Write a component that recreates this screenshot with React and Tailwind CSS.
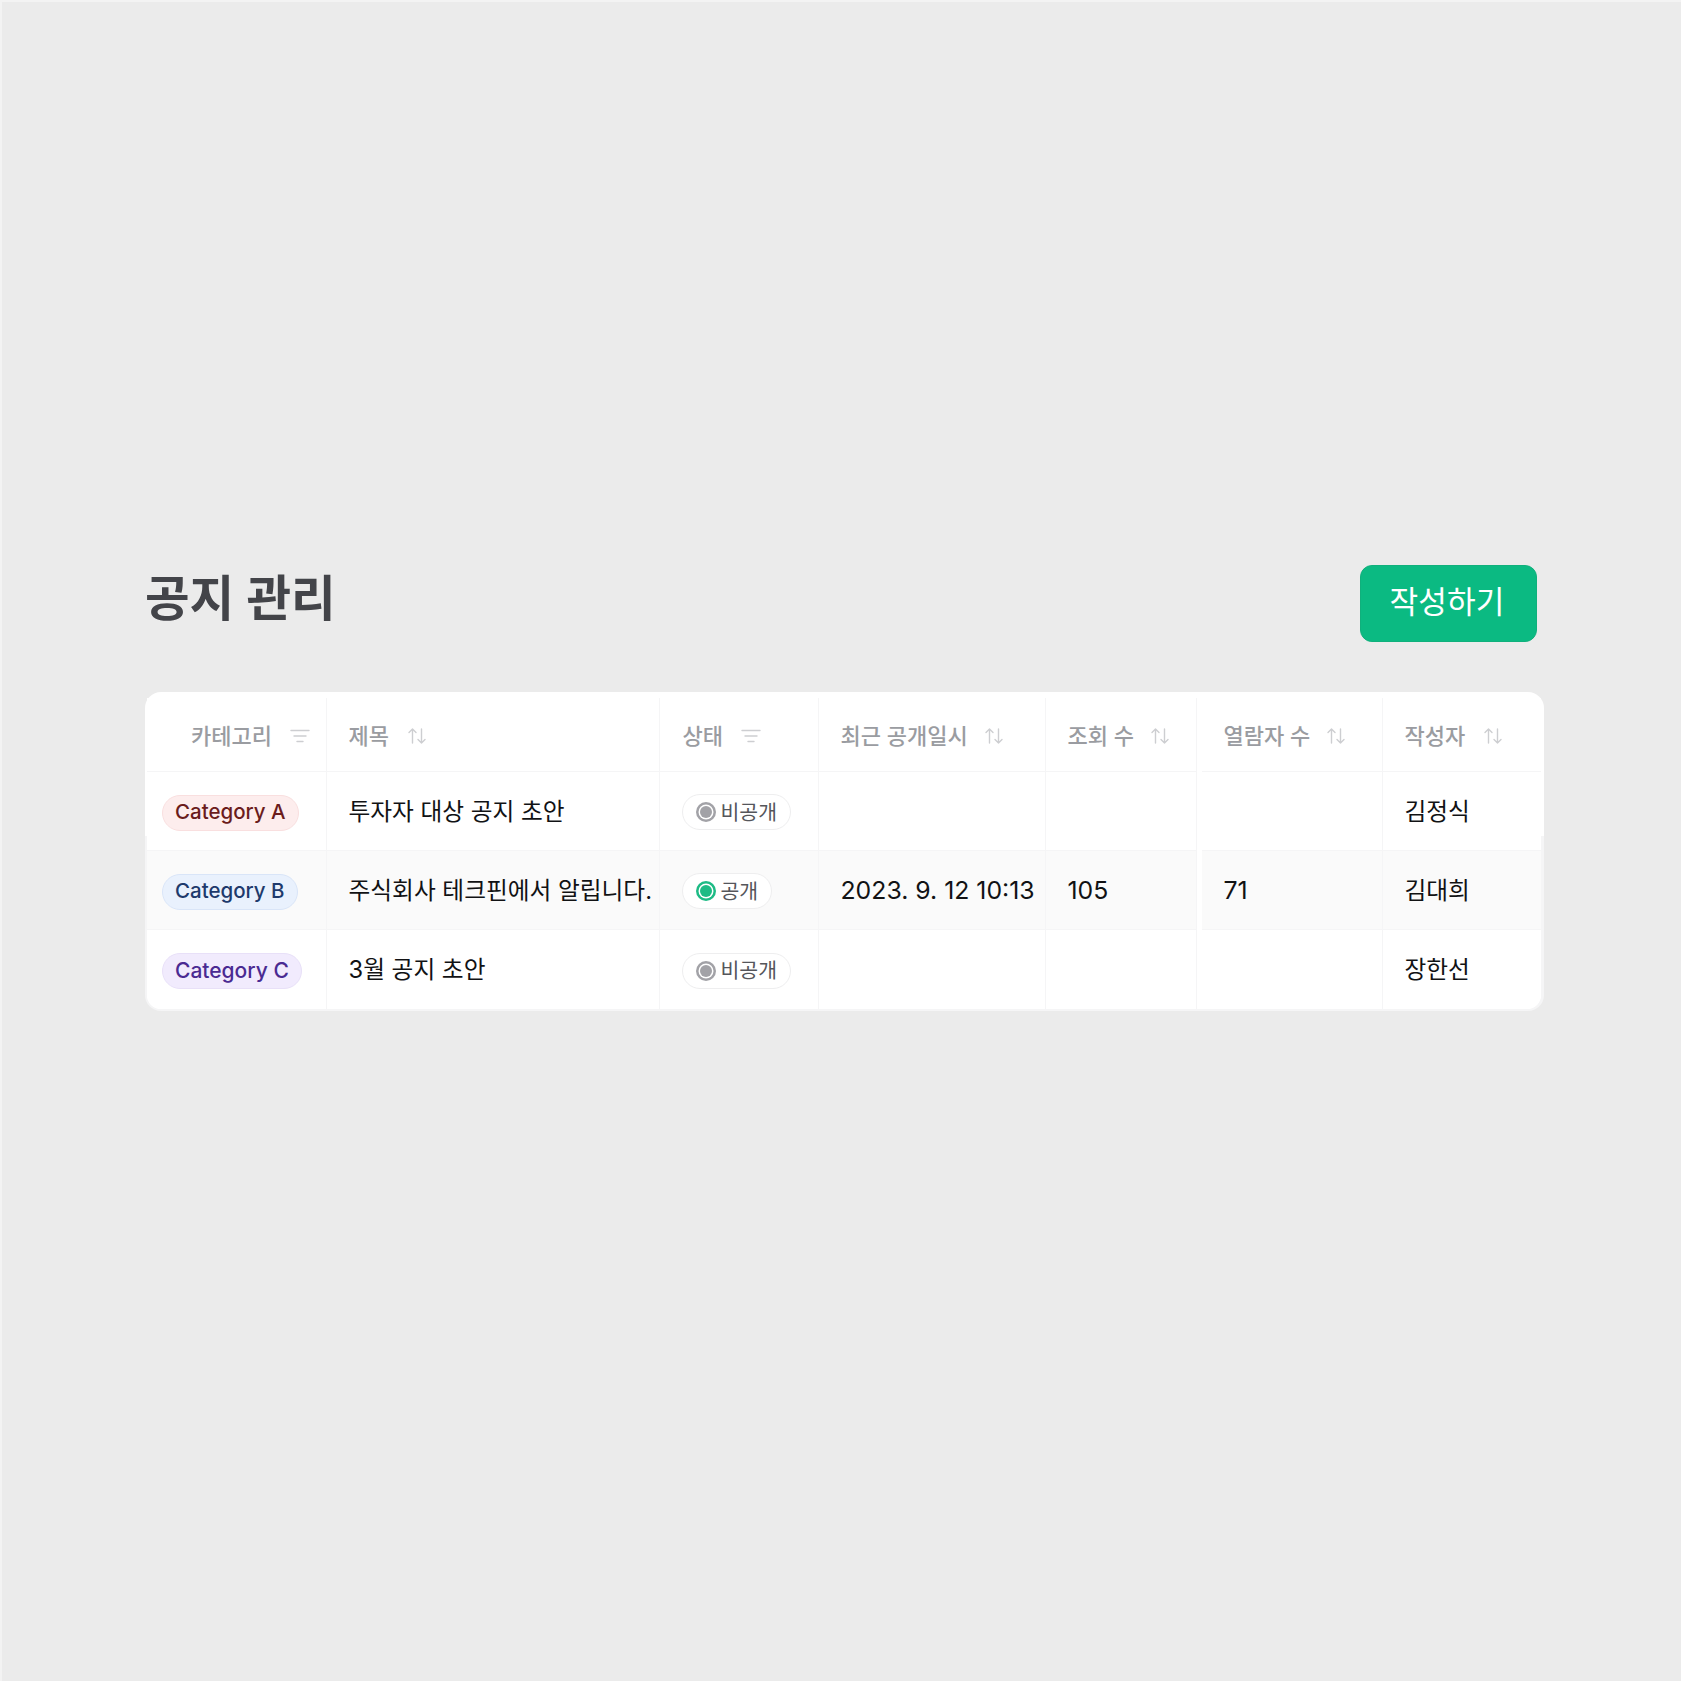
import React from 'react';

const headers = [
    { label: '카테고리', icon: 'filter', pad: 'pl-[44px] gap-[18px] border-r' },
    { label: '제목', icon: 'sort', pad: 'pl-[22px] gap-[18px] border-r' },
    { label: '상태', icon: 'filter', pad: 'pl-[23px] gap-[18px] border-r' },
    { label: '최근 공개일시', icon: 'sort', pad: 'pl-[22px] gap-[16px] border-r' },
    { label: '조회 수', icon: 'sort', pad: 'pl-[22px] gap-[16px] border-r' },
    { label: '열람자 수', icon: 'sort', pad: 'ml-[5px] pl-[22px] gap-[16px] border-r' },
    { label: '작성자', icon: 'sort', pad: 'pl-[22px] gap-[18px]' },
];

const badgeStyles = {
    A: 'text-[20.5px] bg-[#fdeded] border-[#f9dfdf] text-[#6b1c1c]',
    B: 'text-[20.5px] bg-[#e9f1fd] border-[#d9e5f8] text-[#1e3a6c]',
    C: 'text-[21px] bg-[#f1ebfd] border-[#e8e0f8] text-[#4a2a92]',
};

const rows = [
    { cat: 'A', title: '투자자 대상 공지 초안', live: false, date: '', views: '', readers: '', author: '김정식' },
    { cat: 'B', title: '주식회사 테크핀에서 알립니다.', live: true, date: '2023. 9. 12 10:13', views: '105', readers: '71', author: '김대희' },
    { cat: 'C', title: '3월 공지 초안', live: false, date: '', views: '', readers: '', author: '장한선' },
];

function FilterIcon() {
    return (
        <svg width="20" height="16" viewBox="0 0 20 16" fill="none" stroke="#cdced1" strokeWidth="1.4" strokeLinecap="round">
            <path d="M1 2.5h18M4 8h12M7 13.5h6" />
        </svg>
    );
}

function SortIcon() {
    return (
        <svg width="20" height="18" viewBox="0 0 20 18" fill="none" stroke="#cdced1" strokeWidth="1.4" strokeLinecap="round" strokeLinejoin="round">
            <path d="M5.5 16V2M2 5.5L5.5 2 9 5.5" />
            <path d="M14.5 2v14M11 12.5l3.5 3.5 3.5-3.5" />
        </svg>
    );
}

function Category({ cat }) {
    return (
        <span className={`inline-flex items-center h-[36px] px-[12px] rounded-full border font-medium ${badgeStyles[cat]}`}>
            Category {cat}
        </span>
    );
}

function Status({ live }) {
    return (
        <span className="inline-flex items-center gap-[5px] h-[36px] px-[13px] rounded-full border border-[#eeeeef] bg-white text-[20.5px] text-[#55565b]">
            <span className={`flex items-center justify-center w-[20px] h-[20px] rounded-full ${live ? 'bg-[#1dbb85]' : 'bg-[#a2a2a7]'}`}>
                <span className={`w-[12px] h-[12px] rounded-full ring-[1.5px] ring-white ${live ? 'bg-[#1dbb85]' : 'bg-[#a2a2a7]'}`} />
            </span>
            <span className="pt-[2px]">{live ? '공개' : '비공개'}</span>
        </span>
    );
}

function Row({ row, last }) {
    const bg = row.live ? 'bg-[#fafafa]' : 'bg-white';
    const line = last ? '' : 'border-b';
    const cell = `h-[79px] flex items-center border-[#f5f5f6] text-[#111214] ${bg} ${line}`;
    const num = `${cell} pl-[22px] pt-[2px] text-[24.8px] border-r`;
    return (
        <>
            <div className={`${cell} border-r pl-[15px] pt-[3px]`}><Category cat={row.cat} /></div>
            <div className={`${cell} border-r pl-[22px] pt-[1px] text-[23.7px] ${row.live ? 'self-start h-[77px]' : ''}`}>{row.title}</div>
            <div className={`${cell} border-r pl-[22px] pt-[2px]`}><Status live={row.live} /></div>
            <div className={num}>{row.date}</div>
            <div className={num}>{row.views}</div>
            <div className={`${num} ml-[5px]`}>{row.readers}</div>
            <div className={`${cell} pl-[22px] pt-[1px] text-[23.7px]`}>{row.author}</div>
        </>
    );
}

export default function App() {
    return (
        <div className="min-h-[1681px] bg-[#ebebeb] border-t-2 border-l-2 border-[#f3f3f3] pt-[563px] pl-[143px] pr-[137px] font-['Inter','Noto_Sans_CJK_KR',sans-serif]">
            <div className="flex items-start justify-between pr-[7px] h-[77px]">
                <h1 className="text-[48.5px] leading-[68px] font-semibold text-[#434449]">공지 관리</h1>
                <button className="w-[177px] h-[77px] pr-[3px] pb-[2px] rounded-[12px] bg-[#0bba82] border border-[#10b07c] text-white text-[31.2px]">
                    작성하기
                </button>
            </div>

            <div className="mt-[50px] w-[1399px] rounded-[16px] bg-[linear-gradient(#ffffff_0,#ffffff_45%,#f5f5f6_45%)] pt-[6px] pl-[2px] pr-[3px] pb-[2px]">
                <div className="grid grid-cols-[179.5px_333px_159px_227px_151px_186px_1fr] bg-white rounded-b-[14px] overflow-hidden">
                    {headers.map((h) => (
                        <div key={h.label} className={`h-[74px] flex items-center pt-[3px] border-b border-[#f5f5f6] ${h.pad}`}>
                            <span className="text-[22px] font-medium text-[#9a9ca1]">{h.label}</span>
                            {h.icon === 'filter' ? <FilterIcon /> : <SortIcon />}
                        </div>
                    ))}
                    {rows.map((row, i) => (
                        <Row key={row.cat} row={row} last={i === rows.length - 1} />
                    ))}
                </div>
            </div>
        </div>
    );
}
